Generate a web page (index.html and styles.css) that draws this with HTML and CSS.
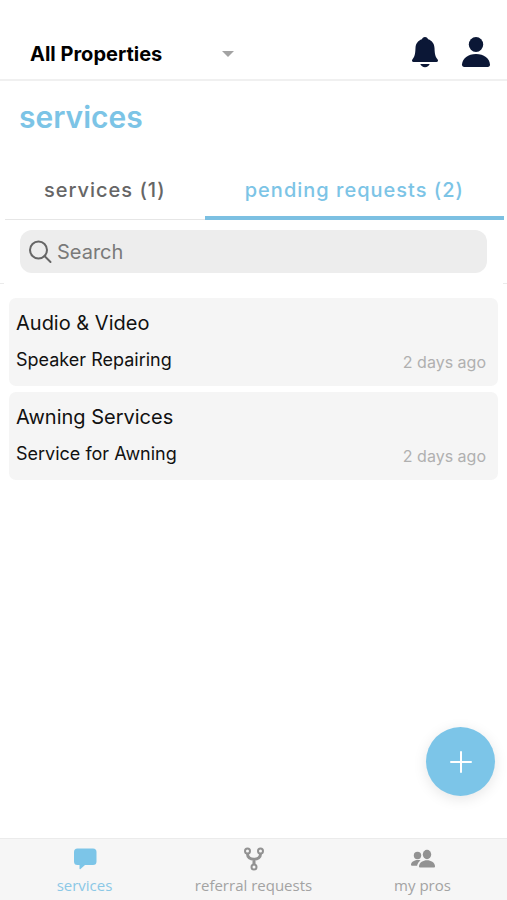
FILE: index.html
```html
<!DOCTYPE html>
<html lang="en">
<head>
<meta charset="utf-8">
<meta name="viewport" content="width=device-width, initial-scale=1">
<title>Services</title>
<link rel="stylesheet" href="styles.css">
</head>
<body>
<div class="app">
  <header class="topbar">
    <div class="picker">
      <select class="picker-select" aria-label="Property">
        <option>All Properties</option>
      </select>
      <svg class="picker-caret" width="12" height="6" viewBox="0 0 12 6" aria-hidden="true"><path d="M0 0h12L6 6z"/></svg>
    </div>
    <div class="actions">
      <button class="icon-button" type="button" aria-label="Notifications">
        <svg width="28" height="32" viewBox="0 0 28 32" aria-hidden="true"><path d="M14 1c-1.700 0-2.700 1-3.100 2.300C6.700 4.700 4.700 8 4.500 12c-.3 6.500-.8 8.700-3 11.300-1 1.200-.5 2.700 1 2.700h23c1.500 0 2-1.500 1-2.700-2.200-2.600-2.700-4.800-3-11.300-.2-4-2.200-7.300-6.400-8.700C16.700 2 15.700 1 14 1zM9.300 28c.7 2 2.500 3.200 4.700 3.200s4-1.200 4.700-3.200z"/></svg>
      </button>
      <button class="icon-button" type="button" aria-label="Profile">
        <svg width="30" height="32" viewBox="0 0 30 32" aria-hidden="true"><ellipse cx="15" cy="8.500" rx="7.200" ry="7.500"/><path d="M15 18C7 18 1.500 22.500 1 28.500c-.1 1.600.8 2.500 2.300 2.500h23.400c1.500 0 2.400-.9 2.300-2.500C28.500 22.500 23 18 15 18z"/></svg>
      </button>
    </div>
  </header>

  <main class="content">
    <h1 class="title">services</h1>
    <div class="tabs" role="tablist">
      <button class="tab" type="button" role="tab" aria-selected="false">services (1)</button>
      <button class="tab tab-wide tab-active" type="button" role="tab" aria-selected="true">pending requests (2)</button>
    </div>
    <div class="search-row">
      <label class="search">
        <svg width="24" height="24" viewBox="0 0 24 24" aria-hidden="true"><circle cx="10.500" cy="10" r="8.500"/><path d="M16.500 16l6 6"/></svg>
        <input class="search-input" type="search" placeholder="Search" aria-label="Search">
      </label>
    </div>
    <ul class="cards">
      <li class="card">
        <h2 class="card-title">Audio &amp; Video</h2>
        <div class="card-row">
          <p class="card-text">Speaker Repairing</p>
          <span class="card-time">2 days ago</span>
        </div>
      </li>
      <li class="card">
        <h2 class="card-title">Awning Services</h2>
        <div class="card-row">
          <p class="card-text">Service for Awning</p>
          <span class="card-time">2 days ago</span>
        </div>
      </li>
    </ul>
  </main>

  <button class="fab" type="button" aria-label="Add request">
    <svg width="24" height="24" viewBox="0 0 24 24" aria-hidden="true"><path d="M12 2v20M2 12h20"/></svg>
  </button>

  <nav class="bottom-nav">
    <a class="nav-item nav-active" href="#services">
      <svg width="24" height="24" viewBox="0 0 24 24" aria-hidden="true"><path d="M4.500 1.500h15.500a3.500 3.500 0 0 1 3.500 3.500v9.500a3.500 3.500 0 0 1-3.500 3.500h-8l-4.500 4c-.5.400-1 .2-1-.4V18h-2A3.500 3.500 0 0 1 1 14.500V5A3.500 3.500 0 0 1 4.500 1.500z"/></svg>
      <span>services</span>
    </a>
    <a class="nav-item" href="#referrals">
      <svg class="fork" width="24" height="24" viewBox="0 0 24 24" aria-hidden="true"><g class="fork-ring"><circle cx="5.500" cy="4" r="2.500"/><circle cx="18.500" cy="4" r="2.500"/><circle cx="12" cy="20" r="2.500"/></g><path class="fork-branch" d="M5.500 7c0 3 2.500 5.200 6.500 5.200S18.500 10 18.500 7M12 12v5"/></svg>
      <span>referral requests</span>
    </a>
    <a class="nav-item" href="#pros">
      <svg width="24" height="24" viewBox="0 0 24 24" aria-hidden="true"><ellipse cx="16" cy="7.500" rx="4.200" ry="4.700"/><path d="M16 13.300c-4 0-7.500 2.200-8 5.700-.1 1.200.4 1.500 1.200 1.500h13.600c.8 0 1.300-.3 1.200-1.500-.5-3.500-4-5.700-8-5.700z"/><circle cx="6.500" cy="8.500" r="3.700"/><path d="M9.500 13.500c-3.700-1.200-9 .5-9.500 4-.1.900.3 1.200 1 1.200h5.100c.4-2.200 1.600-4 3.400-5.200z"/></svg>
      <span>my pros</span>
    </a>
  </nav>
</div>
</body>
</html>
```
FILE: styles.css
```css
* {
  box-sizing: border-box;
}

body {
  margin: 0;
  background: #fff;
  color: #111;
  font-family: Inter, "Liberation Sans", sans-serif;
}

button {
  border: 0;
  padding: 0;
  background: none;
  font: inherit;
  cursor: pointer;
}

h1, h2, p, ul {
  margin: 0;
  padding: 0;
}

svg {
  display: block;
  flex: none;
}

.app {
  display: flex;
  flex-direction: column;
  min-height: 100vh;
}

.topbar {
  display: flex;
  align-items: center;
  justify-content: space-between;
  padding: 32px 16px 7px 30px;
  border-bottom: 2px solid #f0f0f0;
}

.picker {
  display: flex;
  align-items: center;
  width: 204px;
  padding-top: 3px;
}

.picker-select {
  flex: 1;
  min-width: 0;
  padding: 0;
  border: 0;
  appearance: none;
  background: none;
  color: #000;
  font-family: inherit;
  font-size: 20px;
  font-weight: 700;
  line-height: 24px;
}

.picker-caret {
  fill: #a3a3a3;
}

.actions {
  display: flex;
  gap: 22px;
}

.icon-button {
  display: flex;
  align-items: center;
  height: 40px;
  fill: #0b1736;
}

.content {
  flex: 1;
}

.title {
  padding: 17px 19px 24px;
  color: #7cc4e6;
  font-size: 30px;
  font-weight: 600;
  line-height: 38px;
}

.tabs {
  display: flex;
  margin: 0 3px 0 5px;
}

.tab {
  flex: 2;
  height: 60px;
  box-shadow: inset 0 -1px #e6e6e6;
  color: #666;
  font-size: 20px;
  font-weight: 500;
  letter-spacing: 1px;
  white-space: nowrap;
}

.tab-wide {
  flex: 3;
}

.tab-active {
  box-shadow: inset 0 -4px #7cc0e2;
  color: #7cc4e6;
}

/* The divider shows only as short ticks at both edges. */
.search-row {
  padding: 10px 20px;
  border-bottom: 1px solid;
  border-image: linear-gradient(to right, #ebebeb 5px, transparent 5px, transparent calc(100% - 5px), #ebebeb calc(100% - 5px)) 1;
}

.search {
  display: flex;
  align-items: center;
  gap: 5px;
  height: 43px;
  padding: 0 8px;
  border-radius: 12px;
  background: #ededed;
}

.search svg {
  fill: none;
  stroke: #666;
  stroke-width: 2;
  stroke-linecap: round;
}

.search-input {
  flex: 1;
  min-width: 0;
  padding: 0;
  border: 0;
  outline: 0;
  background: none;
  font-family: inherit;
  font-size: 20px;
}

.search-input::placeholder {
  color: #7a7a7a;
}

.cards {
  display: flex;
  flex-direction: column;
  gap: 6px;
  padding: 14px 9px;
  list-style: none;
}

.card {
  padding: 11px 12px 11px 7px;
  border-radius: 7px;
  background: #f5f5f5;
}

.card-title {
  font-size: 20px;
  font-weight: 400;
  line-height: 28px;
}

.card-row {
  display: flex;
  align-items: flex-end;
  justify-content: space-between;
  padding-top: 10px;
}

.card-text {
  padding-bottom: 2px;
  font-size: 18px;
  line-height: 26px;
}

.card-time {
  color: #b0b0b0;
  font-size: 16px;
  line-height: 26px;
}

.fab {
  position: fixed;
  right: 12px;
  bottom: 104px;
  display: flex;
  align-items: center;
  justify-content: center;
  width: 69px;
  height: 69px;
  border-radius: 50%;
  background: #7cc5e8;
  box-shadow: 0 3px 14px rgba(0, 0, 0, 0.1);
}

.fab svg {
  fill: none;
  stroke: #fff;
  stroke-width: 2;
  stroke-linecap: round;
}

.bottom-nav {
  position: sticky;
  bottom: 0;
  display: flex;
  border-top: 1px solid #ebebeb;
  background: #f6f6f6;
}

.nav-item {
  flex: 1;
  display: flex;
  flex-direction: column;
  align-items: center;
  gap: 4px;
  padding: 8px 0 5px;
  color: #a3a3a3;
  fill: #929292;
  font-family: "Open Sans", "Noto Sans", sans-serif;
  font-size: 15px;
  line-height: 20px;
  text-decoration: none;
}

.nav-active {
  color: #8bc8e6;
  fill: #7cc5e8;
}

.fork {
  fill: none;
  stroke: #929292;
}

.fork-ring {
  stroke-width: 2;
}

.fork-branch {
  stroke-width: 3;
}
```
